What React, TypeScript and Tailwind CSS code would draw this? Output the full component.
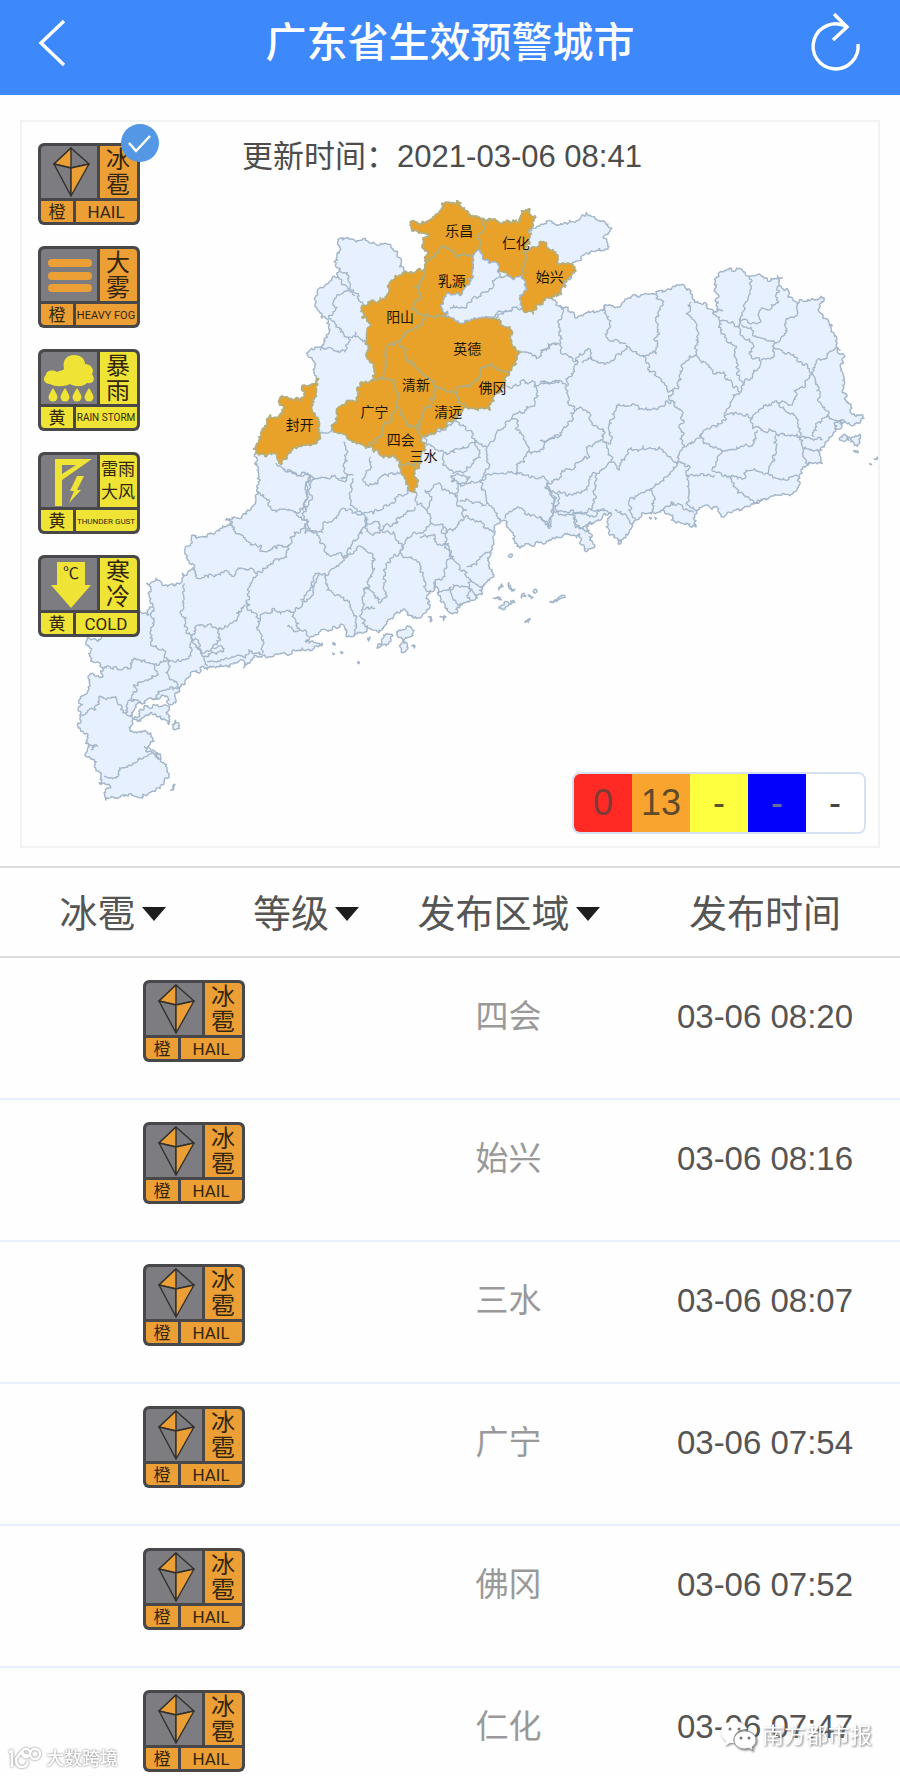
import React from "react";

type Pt = [number, number];

/* ---------- map geometry ---------- */

// Each sheet of the map is stored at three times its drawn size, with its own origin.
const SHEETS: Record<string, Pt> = { A: [240, 180], B: [540, 190], C: [60, 470], D: [300, 400] };

function read(sheet: string, text: string): Pt[] {
  const [ox, oy] = SHEETS[sheet];
  return text
    .trim()
    .split(/\s+/)
    .map((pair) => {
      const [x, y] = pair.split(",").map(Number);
      return [ox + x / 3, oy + y / 3] as Pt;
    });
}

function noise(a: Pt, b: Pt): number {
  const s = Math.sin((a[0] + b[0]) * 12.9898 + (a[1] + b[1]) * 78.233) * 43758.5453;
  return s - Math.floor(s) - 0.5;
}

// Splits an edge into small jagged steps; both directions of an edge give the same line.
function jag(a: Pt, b: Pt, out: Pt[]) {
  const dx = b[0] - a[0];
  const dy = b[1] - a[1];
  const len = Math.hypot(dx, dy);
  if (len < 2) {
    out.push(b);
    return;
  }
  const sign = a[0] < b[0] || (a[0] === b[0] && a[1] < b[1]) ? 1 : -1;
  const k = noise(a, b) * (len > 9 ? 0.28 : 0.85) * sign;
  const m: Pt = [(a[0] + b[0]) / 2 - dy * k, (a[1] + b[1]) / 2 + dx * k];
  jag(a, m, out);
  jag(m, b, out);
}

function toPath(points: Pt[], closed: boolean): string {
  const out: Pt[] = [points[0]];
  for (let i = 1; i < points.length; i++) jag(points[i - 1], points[i], out);
  if (closed) jag(points[points.length - 1], points[0], out);
  return "M" + out.map((p) => p[0].toFixed(1) + " " + p[1].toFixed(1)).join("L") + (closed ? "Z" : "");
}

const province: Pt[] = [
  ...read("A", "235,595 220,575 222,545 205,530 208,510 235,500 262,470 265,440 260,415 228,380 225,350 240,320 275,298 295,290 300,265 285,255 290,220 300,172 330,175 355,180 380,180 405,190 440,190 460,210 475,230 490,265 500,275 555,262 555,240 560,210 550,185 565,160 530,150 515,150 512,122 540,130 575,115 600,90 605,68 630,65 650,60 665,80 685,100 700,110 740,120 775,122 820,118 835,125 845,90 870,85 885,105 880,135 865,150"),
  ...read("B", "0,105 20,98 70,100 110,90 140,65 165,78 205,100 208,125 190,140 205,160 190,180 150,185 120,210 95,222 100,225 85,265 65,310 25,322 62,345 85,350 105,380 135,370 190,360 205,345 240,350 262,325 305,312 350,312 385,295 415,283 455,300 465,335 500,345 520,368 550,360 530,345 535,310 528,270 540,245 570,232 610,240 630,260 665,255 690,272 715,255 730,262 720,285 735,300 760,325 775,340 790,330 855,322 840,355 865,385 885,430 895,475 912,490 905,540 910,600 930,640 945,670 975,685 960,700 935,705 905,690 890,710 875,740 855,770 840,780 850,820 820,820 785,840 775,870 778,890 760,912 700,918 650,940 600,962 545,980 535,960 500,945 475,960 465,975 470,1010 430,1000 395,990 400,975 370,960 340,965 315,970 290,990 270,1020 250,1048 210,1035 205,1000 215,970 190,975 160,1000 140,1010 158,1035 150,1050 165,1065 135,1082 125,1045"),
  ...read("D", "840,400 790,405 740,425 690,435 660,445 645,430 640,400 612,360 595,355 585,400 575,440 570,470 575,515 550,560 545,585 525,600 490,610 470,640 445,635 430,605 412,580 405,545 390,580 390,620 365,650 340,655 320,635 280,650 245,690 205,685 195,680 190,700 150,710 140,690 120,675 60,695"),
  ...read("C", "765,495 735,515 785,520 740,540 725,535 700,540 680,555 640,560 600,560 560,580 550,595 545,570 480,585 440,600 400,605 375,630 350,670 335,705 320,700 320,680 280,690 240,700 215,735 210,770 215,785 270,790 280,815 255,845 290,850 310,880 322,910 310,940 280,965 240,985 200,980 165,985 135,992 130,970 150,955 115,940 120,920 105,900 100,870 75,850 85,830 68,790 52,760 60,730 65,705 55,690 80,665 85,618 125,615 130,595 105,578 90,575 90,545 75,520 85,505 110,515 200,440 250,430 265,435 275,410 265,380 270,350 258,340 285,325 315,345 360,340 365,310 390,300 405,320 400,300 380,270 372,240 395,215 400,195 440,195 495,170 515,155 495,150 560,120 585,95 600,30 590,0"),
  ...read("A", "45,830 45,820 55,770 80,715 125,700 130,650 165,655 190,650 190,615"),
];

const borders: Record<string, string[]> = {
  A: [
    "300,265 325,285 330,320 355,360 370,375",
    "295,290 325,330 280,360 290,380 265,405 285,430 300,455 325,470 320,500 300,515 275,505 240,510",
    "325,330 345,345",
    "325,470 345,455 380,480",
    "240,765 270,755 280,745",
    "310,785 320,810 310,850 315,880 320,890 270,895 215,900 205,930 210,960 195,990",
    "105,850 150,870 210,885 215,900",
    "390,830 395,860 375,885 375,905 400,912 430,885 480,880 490,870",
    "550,775 560,795 610,815 650,805 690,790 710,785 720,820 700,850 680,860 640,880 620,860 610,820",
    "635,885 690,890 680,905 635,905 635,885",
    "655,725 700,760 710,785 740,800 745,850 730,890 720,900",
    "740,800 780,750 815,715 840,750 865,800 870,815 840,850 830,885",
    "815,715 870,680 890,640 885,610 800,615",
    "885,610 960,600",
    "840,510 890,535 920,510 925,490 960,490",
    "770,415 800,390 845,375",
    "865,815 900,815 925,780 960,765",
    "560,768 600,755 640,725 655,725",
  ],
  B: [
    "62,345 70,365 55,395 60,450 75,490 115,515 95,550 80,600 85,640 105,660 85,700 50,740 0,750",
    "0,480 30,465 58,460",
    "0,575 50,570 80,585",
    "115,515 120,490 150,475 160,510 125,515",
    "160,510 215,510 260,465 310,495 330,545 370,575 400,605 395,630 330,660 290,645 230,645 225,680 210,690 215,750 195,755",
    "195,345 210,400 210,450 260,460",
    "350,312 370,345 350,380 360,430 345,450 350,490 310,495",
    "400,605 430,520 465,495 470,450 465,390 440,370 455,335",
    "465,495 520,545 560,555 605,605 570,650 555,675 545,700 485,730 470,745 435,770 425,700 425,660 395,630",
    "520,368 540,390 545,430 585,465 590,530 605,570 605,605",
    "540,390 600,405 605,435 635,455 630,490 665,515 640,550 610,585",
    "600,405 615,350 635,290 630,260",
    "600,395 650,400 660,360 695,355 720,285",
    "605,405 635,410 640,435 705,460 735,430 740,390 775,370 775,340",
    "705,460 705,490 665,510",
    "705,470 770,500 820,550 765,600 760,640 720,640 700,635 640,680 590,665 555,675",
    "820,550 845,510 880,480 905,480",
    "820,550 840,590 835,630 860,660 870,680 830,700 825,740",
    "870,680 890,690 905,690",
    "720,640 770,680 780,740 710,730 690,715 640,715 640,680",
    "485,730 500,760 545,780 640,765 655,720",
    "545,780 520,830 560,855 620,860 620,840 685,850 710,780 710,735",
    "685,850 740,870 778,860",
    "780,740 790,790 810,820",
    "780,740 850,750",
    "790,775 850,780",
    "580,860 595,910 640,930 665,930",
    "435,770 415,815 360,770 265,785 240,840 215,815 190,755",
    "415,815 445,825 440,855 525,855",
    "440,855 450,910 445,945 475,960",
    "415,815 380,860 340,895 330,900 270,930 275,970 290,990",
    "330,900 340,965",
    "370,960 395,935 430,950 465,965",
    "105,660 130,660 160,705 190,715 190,755 140,770 150,800 105,825 20,880 20,895 50,910 120,910 150,860 170,850 215,815",
    "170,850 165,900 155,960 215,970",
    "50,910 50,960 100,975 155,960",
    "15,890 45,930 40,975 25,1010 0,980",
    "100,975 110,1005 160,1000",
    "225,960 260,975 280,1000",
  ],
  D: [
    "30,225 15,260 15,300 5,340 20,370 20,390 50,400 90,365 130,325 185,340 195,380 170,420 130,470 85,465 60,430 50,400",
    "160,235 150,290 160,320 185,340",
    "120,235 160,225",
    "185,340 250,325 290,290 335,265",
    "340,275 345,300 380,330 395,300 375,270 420,250 430,270 470,290",
    "200,350 195,380 210,400 280,395 300,430 300,455",
    "200,370 235,365 235,385 280,370 345,320",
    "380,330 395,370 360,400 315,425 300,455 345,480 370,520 370,560 390,570",
    "395,370 430,380 430,400 490,350 550,370 585,400",
    "360,410 405,410 415,435 445,430 460,470 440,480 435,530 405,545",
    "430,380 435,425 480,500 530,590",
    "490,350 500,330 470,310 470,250 540,240 560,310 595,355",
    "480,305 540,305 560,315",
    "545,240 600,220 735,235",
    "735,235 765,290 760,330",
    "615,355 655,320 720,350 750,385 760,330 820,345",
    "820,345 870,350 915,325",
    "820,350 825,375 870,390",
    "300,455 250,510 260,590 240,610 215,575 190,570 185,640 195,680",
    "130,470 170,450 185,440 225,480 215,530 190,570",
    "130,470 75,530 80,570 140,600 170,650 160,705",
    "75,530 45,520 40,560 0,600",
    "190,630 225,625",
    "500,500 530,495 540,470 570,460",
    "412,580 440,570 460,555 500,560 510,600",
    "455,560 465,600 490,610",
    "510,540 525,550 550,560",
  ],
  C: [
    "590,70 610,75 640,120 700,125 745,155 735,190 770,185",
    "680,0 750,15 740,80 735,110 700,125",
    "505,160 530,190 570,225 600,225 610,245 650,235 685,225 665,265 590,310",
    "685,225 735,160",
    "405,325 480,315 580,300 590,310 565,370 560,420 600,445 700,430 760,370 775,310",
    "370,340 370,400 365,440 380,480 390,495 425,465 480,475 530,445 555,405",
    "480,475 480,510 455,535 430,550 400,510 390,495",
    "275,410 275,460 270,520 320,570 385,565 395,500",
    "400,510 430,560 440,590",
    "455,535 485,530 490,545 430,560",
    "600,445 600,490 605,550",
    "700,430 715,460 745,500",
    "440,575 490,570 555,565 565,540 605,555",
    "680,470 710,485 720,480",
    "130,590 210,590 220,565 280,585 320,570",
    "280,585 285,620 220,645 220,690",
    "320,570 325,620 355,655",
    "355,655 290,675 275,690",
    "60,735 105,720 120,680 165,680 180,720 215,735",
    "200,730 200,700 240,700",
    "130,920 160,925 190,895 260,860 275,850",
    "250,830 270,840 300,870 290,850",
    "80,830 110,830 90,840",
  ],
};

const islands: Record<string, string[]> = {
  C: ["220,745 250,715 290,705 325,715 325,765 300,740 260,738 230,755", "335,765 345,752 355,765 345,780", "330,962 343,945 338,958"],
  D: [
    "230,745 250,705 278,708 258,738",
    "290,705 335,685 338,700 312,730 320,750 298,738 308,722",
    "335,738 345,738 342,745",
    "385,650 393,650 390,665",
    "420,650 438,652 430,662",
    "202,715 210,712 206,724",
    "597,625 620,605 645,608 610,630",
    "580,595 605,600 595,590",
    "598,570 605,552 610,560",
    "628,548 645,568 640,570",
    "665,595 672,580 678,590",
    "685,585 700,592 694,596",
    "700,575 710,570 708,578",
    "750,606 795,587 792,594 760,607",
    "675,668 690,655 686,668",
    "627,466 638,466 634,472",
    "98,728 106,734 103,736",
    "120,757 128,759 124,762",
    "174,785 178,788 176,792",
    "97,760 103,762 99,765",
  ],
  B: [
    "900,745 920,735 930,750 910,752",
    "925,740 962,732 960,760 935,755",
    "885,700 915,690 905,715",
    "943,782 958,788 950,786",
    "992,820 998,822 995,824",
    "1005,806 1016,800 1010,808",
    "236,1062 242,1050 242,1062",
    "330,982 336,985 333,987",
    "345,982 351,985 348,988",
  ],
};

const shaoguan =
  "720,210 745,245 775,250 775,275 780,285 800,285 850,295 860,325 840,345 845,375 800,390 770,400 760,410 730,410 680,420 630,410 605,380 610,350 660,345 690,310 700,260 700,225";

const warned: { name: string; at: Pt; shape: string }[] = [
  { name: "乐昌", at: [658, 155], shape: "555,240 560,210 550,185 565,160 530,150 515,150 512,122 540,130 575,115 600,90 605,68 630,65 650,60 665,80 685,100 700,110 740,120 720,210 700,225 650,230 610,195 580,230" },
  { name: "仁化", at: [828, 190], shape: "740,120 775,122 820,118 835,125 845,90 870,85 885,105 880,135 865,150 870,190 850,215 850,295 800,285 775,275 775,250 745,245 720,210" },
  { name: "始兴", at: [930, 292], shape: "875,200 920,190 955,225 955,252 1000,255 985,295 965,340 925,352 910,370 880,400 845,385 840,345 860,325 850,295 850,215" },
  { name: "乳源", at: [635, 304], shape: "610,195 650,230 700,225 700,260 690,310 660,345 610,350 605,380 630,410 555,410 520,375 540,340 525,320 550,290 555,262 555,240 580,230" },
  { name: "阳山", at: [480, 411], shape: "500,275 555,262 550,290 525,320 540,340 520,375 555,410 515,450 480,480 440,505 435,560 425,595 405,600 400,560 380,530 390,510 375,490 380,460 390,430 365,410 365,375 440,345 465,285" },
  { name: "英德", at: [682, 510], shape: "555,410 630,410 680,420 730,410 765,415 800,440 815,490 840,515 825,555 805,575 755,550 725,560 710,600 670,620 650,635 590,620 555,580 510,540 490,500 480,480 515,450" },
  { name: "清新", at: [528, 617], shape: "480,480 490,500 510,540 555,580 590,620 575,670 545,700 530,740 505,740 470,680 455,600 425,595 435,560 440,505" },
  { name: "佛冈", at: [758, 627], shape: "755,550 805,575 795,610 760,650 750,690 715,690 680,680 655,665 650,635 670,620 710,600 725,560" },
  { name: "清远", at: [625, 697], shape: "590,620 650,635 655,665 680,680 640,720 600,745 545,770 530,740 545,700 575,670" },
  { name: "广宁", at: [403, 697], shape: "425,595 455,600 470,680 455,720 430,735 420,770 385,800 330,780 280,755 275,745 290,720 290,685 320,660 350,660 360,620 405,600" },
  { name: "四会", at: [482, 783], shape: "470,680 505,740 530,740 545,770 555,800 540,850 480,850 465,830 420,825 385,800 420,770 430,735 455,720" },
  { name: "三水", at: [550, 830], shape: "480,850 540,850 525,880 525,935 515,935 500,900" },
  { name: "封开", at: [178, 737], shape: "235,595 225,650 215,690 235,720 240,770 215,790 160,800 125,850 100,820 45,820 55,770 80,715 125,700 130,650 165,655 190,650 190,615" },
];

function GuangdongMap() {
  return (
    <svg viewBox="21 121 858 726" className="block h-auto w-full" role="img" aria-label="广东省">
      <g fill="#e6f0fe" stroke="#a3b5c8" strokeWidth="1.4" strokeLinejoin="round">
        <path d={toPath(province, true)} />
        {Object.entries(islands).map(([sheet, list]) =>
          list.map((s) => <path key={sheet + s} d={toPath(read(sheet, s), true)} />)
        )}
      </g>
      <g fill="none" stroke="#a3b5c8" strokeWidth="1.3" strokeLinejoin="round">
        {Object.entries(borders).map(([sheet, list]) =>
          list.map((s) => <path key={sheet + s} d={toPath(read(sheet, s), false)} />)
        )}
      </g>
      <g fill="#e9a229" stroke="#b3ae7c" strokeWidth="1.7" strokeLinejoin="round">
        {warned.map((w) => (
          <path key={w.name} d={toPath(read("A", w.shape), true)} />
        ))}
      </g>
      <g fill="#e6f0fe" stroke="#a3b5c8" strokeWidth="1.3" strokeLinejoin="round">
        <path d={toPath(read("A", shaoguan), true)} />
        <path d={toPath(read("A", "630,385 680,380 700,350 760,310 780,285"), false)} fill="none" />
      </g>
      <g fontSize="14" fill="#1c1405" textAnchor="middle">
        {warned.map((w) => (
          <text key={w.name} x={240 + w.at[0] / 3} y={184 + w.at[1] / 3}>
            {w.name}
          </text>
        ))}
      </g>
    </svg>
  );
}

/* ---------- warning signs ---------- */

type Kind = "hail" | "fog" | "rain" | "gust" | "cold";

const signs: Record<Kind, { zh: string[]; en: string; level: string; color: string; size: number }> = {
  hail: { zh: ["冰", "雹"], en: "HAIL", level: "橙", color: "#eb9f35", size: 17 },
  fog: { zh: ["大", "雾"], en: "HEAVY FOG", level: "橙", color: "#eb9f35", size: 11 },
  rain: { zh: ["暴", "雨"], en: "RAIN STORM", level: "黄", color: "#efe336", size: 10 },
  gust: { zh: ["雷雨", "大风"], en: "THUNDER GUST", level: "黄", color: "#efe336", size: 8 },
  cold: { zh: ["寒", "冷"], en: "COLD", level: "黄", color: "#efe336", size: 17 },
};

function Glyph({ kind, color }: { kind: Kind; color: string }) {
  switch (kind) {
    case "hail":
      return (
        <g stroke="#33302c" strokeWidth="1.4" strokeLinejoin="round">
          <path d="M33 5 16 21 33 25 51 21Z" fill="#7d7c80" />
          <path d="M33 5 16 21 33 25Z" fill={color} />
          <path d="M16 21 33 53 33 25Z" fill="#7d7c80" />
          <path d="M51 21 33 53 33 25Z" fill={color} />
        </g>
      );
    case "fog":
      return (
        <g fill={color}>
          <rect x="10" y="13" width="44" height="8" rx="4" />
          <rect x="10" y="26" width="44" height="8" rx="4" />
          <rect x="10" y="38" width="44" height="8" rx="4" />
        </g>
      );
    case "rain":
      return (
        <g fill={color}>
          <path d="M12 35C6 35 4 29 8 26C8 22 14 20 19 23C22 21 25 22 26 20C24 11 29 6 36 6C43 6 47 10 47 15C53 15 57 21 54 25C58 31 55 35 49 34C44 39 35 37 32 35C26 38 17 38 12 35Z" />
          {[15, 27, 39, 51].map((x) => (
            <path key={x} d={`M${x} 39Q${x - 4.5} 46 ${x - 4.5} 48A4.5 4.5 0 0 0 ${x + 4.5} 48Q${x + 4.5} 46 ${x} 39Z`} />
          ))}
        </g>
      );
    case "gust":
      return (
        <g fill={color}>
          <path fillRule="evenodd" d="M17 7H54L24 28V54H17ZM24 13V22L38 13Z" />
          <path d="M39 24 32 39 36 39 31 51 43 38 39 38 46 24Z" />
        </g>
      );
    case "cold":
      return (
        <g>
          <path d="M19 7H47V30H53L33 53 13 30H19Z" fill={color} />
          <text x="33" y="24" fontSize="16" textAnchor="middle" fill="#2b2a20">
            ℃
          </text>
        </g>
      );
  }
}

function Sign({ kind }: { kind: Kind }) {
  const s = signs[kind];
  const wide = s.zh[0].length > 1;
  return (
    <svg viewBox="0 0 102 82" width="102" height="82" className="block" role="img" aria-label={s.zh.join("")}>
      <rect width="102" height="82" rx="6" fill="#48474a" />
      <path d="M3 7a4 4 0 0 1 4-4H59V55H3Z" fill="#7d7c80" />
      <path d="M62 3H95a4 4 0 0 1 4 4V55H62Z" fill={s.color} />
      <path d="M3 58H35V79H7a4 4 0 0 1-4-4Z" fill={s.color} />
      <path d="M38 58H99V75a4 4 0 0 1-4 4H38Z" fill={s.color} />
      <Glyph kind={kind} color={s.color} />
      <g fill="#33260d" textAnchor="middle">
        <g fontSize={wide ? 17 : 24}>
          <text x="80" y={wide ? 23 : 25}>{s.zh[0]}</text>
          <text x="80" y={wide ? 46 : 50}>{s.zh[1]}</text>
        </g>
        <text x="19" y="75" fontSize="17">
          {s.level}
        </text>
        <text x="68" y={69 + Math.round(s.size * 0.34)} fontSize={s.size} className="font-[Roboto,sans-serif]">
          {s.en}
        </text>
      </g>
    </svg>
  );
}

/* ---------- page ---------- */

const kinds: Kind[] = ["hail", "fog", "rain", "gust", "cold"];

const rows = [
  ["四会", "03-06 08:20"],
  ["始兴", "03-06 08:16"],
  ["三水", "03-06 08:07"],
  ["广宁", "03-06 07:54"],
  ["佛冈", "03-06 07:52"],
  ["仁化", "03-06 07:47"],
];

const counts = [
  { value: "0", style: "bg-[#fe2a23] text-[#7e3a36]" },
  { value: "13", style: "bg-[#f9a42f] text-[#5f4a2c]" },
  { value: "-", style: "bg-[#feff3f] text-[#55552f]" },
  { value: "-", style: "bg-[#0300fc] text-[#6a6aa0]" },
  { value: "-", style: "bg-white text-[#444444]" },
];

function Filter({ label }: { label: string }) {
  return (
    <label className="inline-flex items-center gap-1.5">
      <select
        aria-label={label}
        className="field-sizing-content cursor-pointer appearance-none bg-transparent p-0 text-[38px] leading-[56px] text-[#555555] outline-none"
      >
        <option>{label}</option>
      </select>
      <svg width="24" height="16" viewBox="0 0 24 16" aria-hidden="true">
        <path d="M0 1H24L12 15Z" fill="#1d1d1d" />
      </svg>
    </label>
  );
}

export default function App() {
  return (
    <div className="relative h-screen overflow-hidden bg-[#fefefe] font-['Liberation_Sans','Noto_Sans_CJK_SC',sans-serif] text-[#4d4d4d]">
      <header className="flex h-[95px] items-center justify-between bg-[#3d89fb] px-9 pb-2.5 text-white">
        <button type="button" aria-label="返回" className="flex w-14">
          <svg width="32" height="48" viewBox="0 0 32 48" fill="none" stroke="currentColor" strokeWidth="3.4">
            <path d="M28 2 5 24 28 46" />
          </svg>
        </button>
        <h1 className="text-[41px] leading-[60px] font-medium">广东省生效预警城市</h1>
        <button type="button" aria-label="刷新" className="flex w-14 justify-end">
          <svg width="60" height="64" viewBox="0 0 60 64" className="shrink-0" fill="none" stroke="currentColor" strokeWidth="3.4">
            <path d="M54 33A22.500 22.500 0 1 1 43 16" />
            <path d="M30 3 43 16 29 29" />
          </svg>
        </button>
      </header>

      <main>
        <section className="relative mx-5 mt-[25px] border-2 border-[#f1f2f4]">
          <GuangdongMap />
          <p className="absolute top-3 left-0 w-full pr-10 pl-6 text-center text-[31px] leading-[46px]">
            更新时间：2021-03-06 08:41
          </p>
          <div className="absolute top-[21px] left-4 flex flex-col gap-[21px]">
            {kinds.map((kind, i) => (
              <button key={kind} type="button" className="relative block" aria-pressed={i === 0}>
                <Sign kind={kind} />
                {i === 0 && (
                  <svg
                    className="absolute -top-5 -right-5"
                    width="40"
                    height="40"
                    viewBox="0 0 40 40"
                    fill="none"
                    aria-hidden="true"
                  >
                    <circle cx="20" cy="20" r="19" fill="#5497e4" />
                    <path d="M9 20 16 28 30 13" stroke="#fff" strokeWidth="2.500" />
                  </svg>
                )}
              </button>
            ))}
          </div>
          <div className="absolute right-3 bottom-3 flex overflow-hidden rounded-lg border-2 border-[#d3e1f3] text-[36px] leading-[58px]">
            {counts.map((c, i) => (
              <span key={i} className={"w-[58px] text-center " + c.style}>
                {c.value}
              </span>
            ))}
          </div>
        </section>

        <table className="mt-[18px] w-full table-fixed border-collapse">
          <colgroup>
            <col className="w-[25%]" />
            <col className="w-[18%]" />
            <col className="w-[27%]" />
            <col className="w-[30%]" />
          </colgroup>
          <thead>
            <tr className="h-[90px] border-y-2 border-[#dcdcdc] text-[38px] leading-[56px] text-[#555555]">
              <th className="p-0 pt-1 text-center font-normal">
                <Filter label="冰雹" />
              </th>
              <th className="p-0 pt-1 text-center font-normal">
                <Filter label="等级" />
              </th>
              <th className="p-0 pt-1 text-center font-normal">
                <Filter label="发布区域" />
              </th>
              <th className="p-0 pt-1 text-center font-normal">发布时间</th>
            </tr>
          </thead>
          <tbody>
            {rows.map(([city, time]) => (
              <tr key={city} className="h-[142px] border-b-2 border-[#eaf0f9] align-top">
                <td colSpan={2} className="p-0 pt-[22px]">
                  <div className="flex justify-center">
                    <Sign kind="hail" />
                  </div>
                </td>
                <td className="p-0 pt-[35px] text-center text-[33px] leading-[48px] text-[#999999]">{city}</td>
                <td className="p-0 pt-[35px] text-center text-[33px] leading-[48px] text-[#555555]">{time}</td>
              </tr>
            ))}
          </tbody>
        </table>
      </main>

      <div className="absolute bottom-1 left-2 flex items-center gap-1 text-white drop-shadow-[0_0_1px_#777777]">
        <svg width="34" height="22" viewBox="0 0 34 22" fill="none" stroke="currentColor" strokeWidth="2.500" aria-hidden="true">
          <path d="M1 4 4 3V19M14 3 8 11Q8 19 14 19 19 19 20 13M14 3Q15 8 20 7" />
          <circle cx="18" cy="5" r="4" />
          <circle cx="27" cy="6" r="5" />
        </svg>
        <span className="text-[18px] leading-[26px] font-medium">大数跨境</span>
      </div>
      <div className="absolute right-7 bottom-6 flex items-center gap-1 text-white drop-shadow-[1px_1px_1px_#777777]">
        <svg width="38" height="32" viewBox="0 0 38 32" fill="currentColor" aria-hidden="true">
          <path d="M14 1C6 1 1 6 1 12C1 16 3 19 6 21L5 26L10 23H14C12 15 18 9 27 9C25 4 20 1 14 1Z" />
          <path d="M25 11C19 11 14 15 14 20S19 29 25 29L29 28L33 31L32 27C35 25 36 23 36 20C36 15 31 11 25 11Z" stroke="#999999" strokeWidth="1" />
          <g fill="#777777">
            <circle cx="10" cy="9" r="1.500" />
            <circle cx="19" cy="9" r="1.500" />
            <circle cx="21" cy="18" r="1.500" />
            <circle cx="29" cy="18" r="1.500" />
          </g>
        </svg>
        <span className="text-[22px] leading-[32px]">南方都市报</span>
      </div>
    </div>
  );
}
